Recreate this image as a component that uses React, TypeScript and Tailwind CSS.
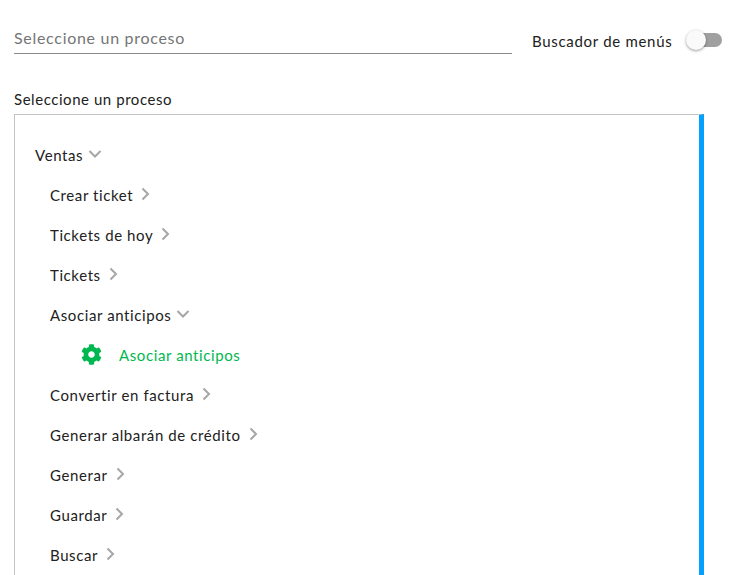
import { FaCog } from 'react-icons/fa'

type Row = { label: string; open?: boolean; top?: boolean }

const before: Row[] = [
  { label: 'Ventas', open: true, top: true },
  { label: 'Crear ticket' },
  { label: 'Tickets de hoy' },
  { label: 'Tickets' },
  { label: 'Asociar anticipos', open: true },
]

const after: Row[] = [
  { label: 'Convertir en factura' },
  { label: 'Generar albarán de crédito' },
  { label: 'Generar' },
  { label: 'Guardar' },
  { label: 'Buscar' },
]

function Chevron({ open }: { open?: boolean }) {
  return (
    <svg width="14" height="14" viewBox="0 0 14 14" fill="none" stroke="#a6a6a6" strokeWidth="2" className="ml-[5px] -mt-[3px] shrink-0">
      <path d={open ? 'M1.5 4l5.5 5.5L12.500 4' : 'M4.5 1.500l5.500 5.500-5.500 5.500'} />
    </svg>
  )
}

function MenuRow({ label, open, top }: Row) {
  return (
    <div className={`h-10 flex items-center text-[15px] tracking-[0.6px] text-[#212121] ${top ? 'pl-5' : 'pl-[35px]'}`}>
      <span>{label}</span>
      <Chevron open={open} />
    </div>
  )
}

export default function App() {
  return (
    <div className="h-[575px] w-[741px] overflow-hidden bg-white font-['Lato',sans-serif]">
      <div className="flex pl-[14px] pt-[28px]">
        <div className="h-[26px] w-[498px] border-b border-[#8a8a8a] text-[16px] leading-[20px] tracking-[0.7px] text-[#757575]">
          Seleccione un proceso
        </div>
        <div className="ml-[20px] mt-[3px] flex items-start">
          <span className="text-[15px] leading-[20px] tracking-[0.7px] text-[#212121]">Buscador de menús</span>
          <div className="relative ml-[18px] mt-[2px] h-[14px] w-[32px] rounded-full bg-[#a0a0a0]">
            <div className="absolute -left-[4px] -top-[3px] h-[20px] w-[20px] rounded-full bg-[#fafafa] shadow-[0_1px_3px_rgba(0,0,0,0.4)]" />
          </div>
        </div>
      </div>
      <div className="pl-[14px] pt-[35px]">
        <div className="text-[15px] leading-[20px] tracking-[0.55px] text-[#212121]">Seleccione un proceso</div>
        <div className="mt-[5px] h-[500px] w-[690px] border-l border-t border-[#c4c4c4] border-r-[5px] border-r-[#03a0fe] pt-[20px]">
          {before.map((r) => (
            <MenuRow key={r.label} {...r} />
          ))}
          <div className="flex h-10 items-center pl-[66px] text-[15px] tracking-[0.6px] text-[#00b84f]">
            <FaCog className="h-[21px] w-[21px] -mt-[1px]" />
            <span className="ml-[17px]">Asociar anticipos</span>
          </div>
          {after.map((r) => (
            <MenuRow key={r.label} {...r} />
          ))}
        </div>
      </div>
    </div>
  )
}
